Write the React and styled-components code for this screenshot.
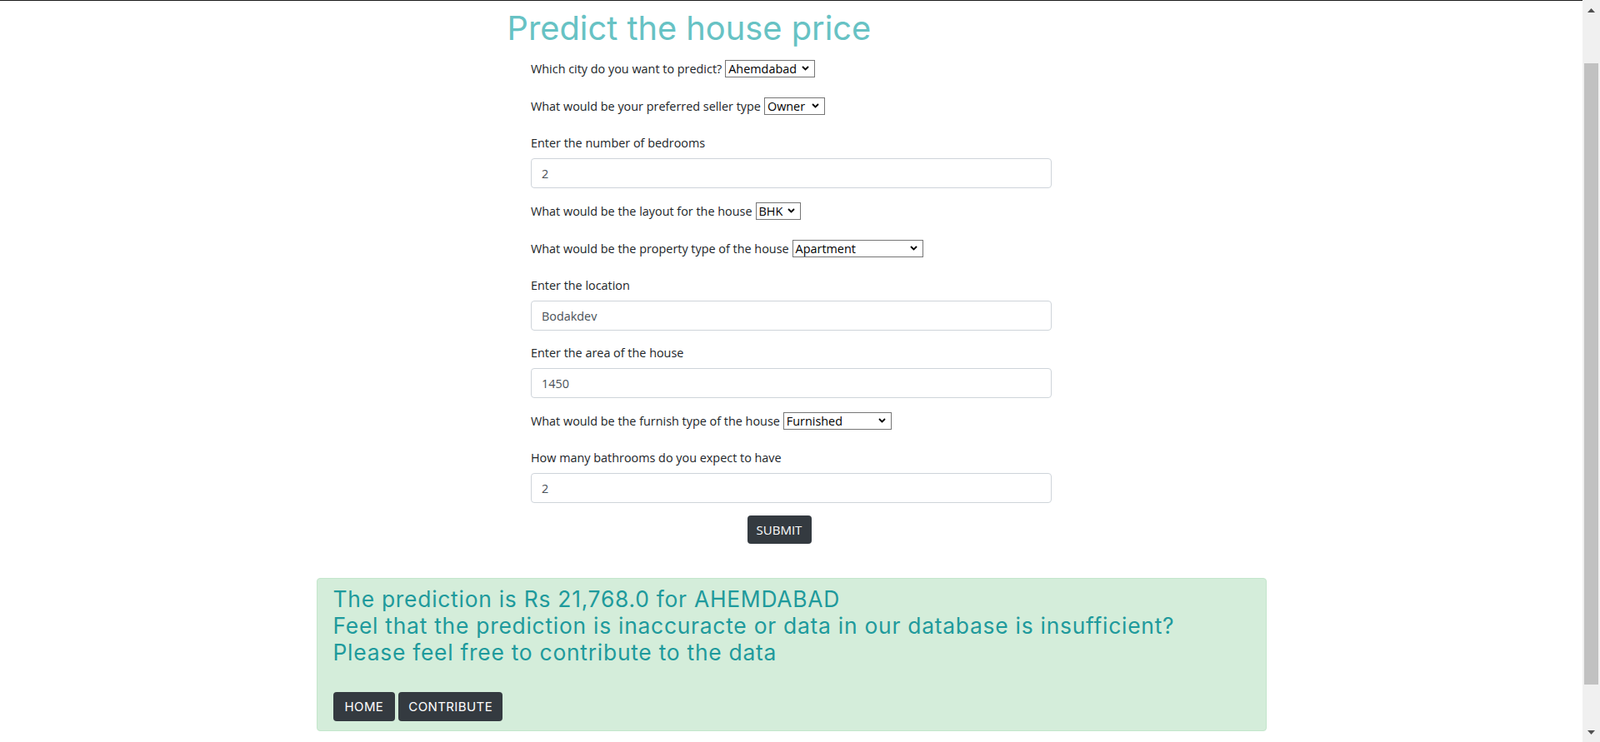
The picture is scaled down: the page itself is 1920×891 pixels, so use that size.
import React from 'react';
import styled, { createGlobalStyle } from 'styled-components';

const GlobalStyle = createGlobalStyle`
  * { box-sizing: border-box; }
  html, body { margin: 0; padding: 0; background: #fff; }
  body {
    font-family: "Open Sans", "Noto Sans", sans-serif;
    font-size: 14.4px;
    color: #212529;
  }
`;

const fields = [
  { kind: 'select', label: 'Which city do you want to predict?', value: 'Ahemdabad', width: 108 },
  { kind: 'select', label: 'What would be your preferred seller type', value: 'Owner', width: 73 },
  { kind: 'input', label: 'Enter the number of bedrooms', value: '2' },
  { kind: 'select', label: 'What would be the layout for the house', value: 'BHK', width: 54 },
  { kind: 'select', label: 'What would be the property type of the house', value: 'Apartment', width: 157 },
  { kind: 'input', label: 'Enter the location', value: 'Bodakdev' },
  { kind: 'input', label: 'Enter the area of the house', value: '1450' },
  { kind: 'select', label: 'What would be the furnish type of the house', value: 'Furnished', width: 130 },
  { kind: 'input', label: 'How many bathrooms do you expect to have', value: '2' },
];

function Chevron() {
  return (
    <svg width="9" height="6" viewBox="0 0 9 6">
      <path d="M1 1 L4.5 4.5 L8 1" fill="none" stroke="#000" strokeWidth="1.8" />
    </svg>
  );
}

function FakeSelect({ value, width }) {
  return (
    <SelectBox $width={width}>
      <span>{value}</span>
      <Chevron />
    </SelectBox>
  );
}

export default function App() {
  return (
    <>
      <GlobalStyle />
      <Screen>
        <Page>
          <TopEdge />
          <Container>
            <Title>Predict the house price</Title>
            <Form onSubmit={(e) => e.preventDefault()}>
              {fields.map((f) =>
                f.kind === 'select' ? (
                  <SelectRow key={f.label}>
                    {f.label} <FakeSelect value={f.value} width={f.width} />
                  </SelectRow>
                ) : (
                  <Group key={f.label}>
                    <Label>{f.label}</Label>
                    <Input defaultValue={f.value} />
                  </Group>
                )
              )}
              <SubmitWrap>
                <SubmitButton type="submit">SUBMIT</SubmitButton>
              </SubmitWrap>
            </Form>
            <Alert>
              <AlertLine>The prediction is Rs 21,768.0 for AHEMDABAD</AlertLine>
              <AlertLine>Feel that the prediction is inaccuracte or data in our database is insufficient?</AlertLine>
              <AlertLine>Please feel free to contribute to the data</AlertLine>
              <ButtonRow>
                <DarkButton $pad={14}>HOME</DarkButton>
                <DarkButton>CONTRIBUTE</DarkButton>
              </ButtonRow>
            </Alert>
          </Container>
        </Page>
        <ScrollBar>
          <ArrowCell>
            <svg width="9" height="5" viewBox="0 0 9 5"><path d="M0 5 L4.5 0 L9 5 Z" fill="#505050" /></svg>
          </ArrowCell>
          <Track>
            <Thumb />
          </Track>
          <ArrowCell>
            <svg width="9" height="5" viewBox="0 0 9 5"><path d="M0 0 L4.5 5 L9 0 Z" fill="#505050" /></svg>
          </ArrowCell>
        </ScrollBar>
      </Screen>
    </>
  );
}

const Screen = styled.div`
  display: flex;
  width: 1920px;
  height: 891px;
  overflow: hidden;
`;

const Page = styled.div`
  flex: 1;
  display: flex;
  flex-direction: column;
  min-width: 0;
`;

const TopEdge = styled.div`
  height: 1px;
  background: #1b1b1b;
  flex-shrink: 0;
`;

const Container = styled.div`
  width: 1140px;
  margin: 0 auto;
`;

const Title = styled.h1`
  margin: 9px 0 12px 229px;
  font-family: Inter, "Open Sans", sans-serif;
  font-weight: 400;
  font-size: 39.8px;
  line-height: 48px;
  color: #67c2c4;
`;

const Form = styled.form`
  width: 625px;
  margin: 0 auto;
`;

const SelectRow = styled.div`
  display: flex;
  align-items: center;
  gap: 4px;
  height: 24px;
  margin-bottom: 21px;
`;

const SelectBox = styled.div`
  display: inline-flex;
  align-items: center;
  justify-content: space-between;
  width: ${(p) => p.$width}px;
  height: 21px;
  padding: 0 6px 0 3px;
  border: 1px solid #767676;
  background: #fff;
  color: #000;
  font-size: 14.4px;
`;

const Group = styled.div`
  margin-bottom: 15px;
`;

const Label = styled.label`
  display: block;
  line-height: 24px;
  margin-bottom: 6px;
`;

const Input = styled.input`
  display: block;
  width: 100%;
  height: 36px;
  padding: 0 12px;
  border: 1px solid #ced4da;
  border-radius: 4px;
  font-family: inherit;
  font-size: 14.4px;
  color: #495057;
  outline: none;
`;

const SubmitWrap = styled.div`
  display: flex;
  justify-content: center;
  padding-right: 29px;
  margin-bottom: 41px;
`;

const DarkButton = styled.button`
  height: 35px;
  padding: 0 ${(p) => p.$pad || 12}px;
  border: none;
  border-radius: 4px;
  background: #343a40;
  color: #fff;
  font-family: Inter, "Open Sans", sans-serif;
  font-size: 15px;
  letter-spacing: 0.4px;
  cursor: pointer;
`;

const SubmitButton = styled(DarkButton)`
  width: 77px;
  height: 34px;
  padding: 0;
  font-family: "Open Sans", sans-serif;
  font-size: 15px;
  letter-spacing: 0;
`;

const Alert = styled.div`
  padding: 8px 19px 11px;
  border: 1px solid #c3e6cb;
  border-radius: 4px;
  background: #d4edda;
`;

const AlertLine = styled.div`
  font-family: Inter, "Open Sans", sans-serif;
  font-size: 26.4px;
  letter-spacing: 0.75px;
  line-height: 32px;
  color: #1e9a9c;

  &:nth-of-type(3) {
    margin-bottom: 32px;
  }
`;

const ButtonRow = styled.div`
  display: flex;
  gap: 4px;
`;

const ScrollBar = styled.div`
  width: 21px;
  flex-shrink: 0;
  display: flex;
  flex-direction: column;
  background: #f0f0f0;
  padding: 0 2px;
`;

const ArrowCell = styled.div`
  height: 24px;
  display: flex;
  align-items: center;
  justify-content: center;
`;

const Track = styled.div`
  flex: 1;
  padding-top: 52px;
`;

const Thumb = styled.div`
  height: 746px;
  background: #c1c1c1;
`;
